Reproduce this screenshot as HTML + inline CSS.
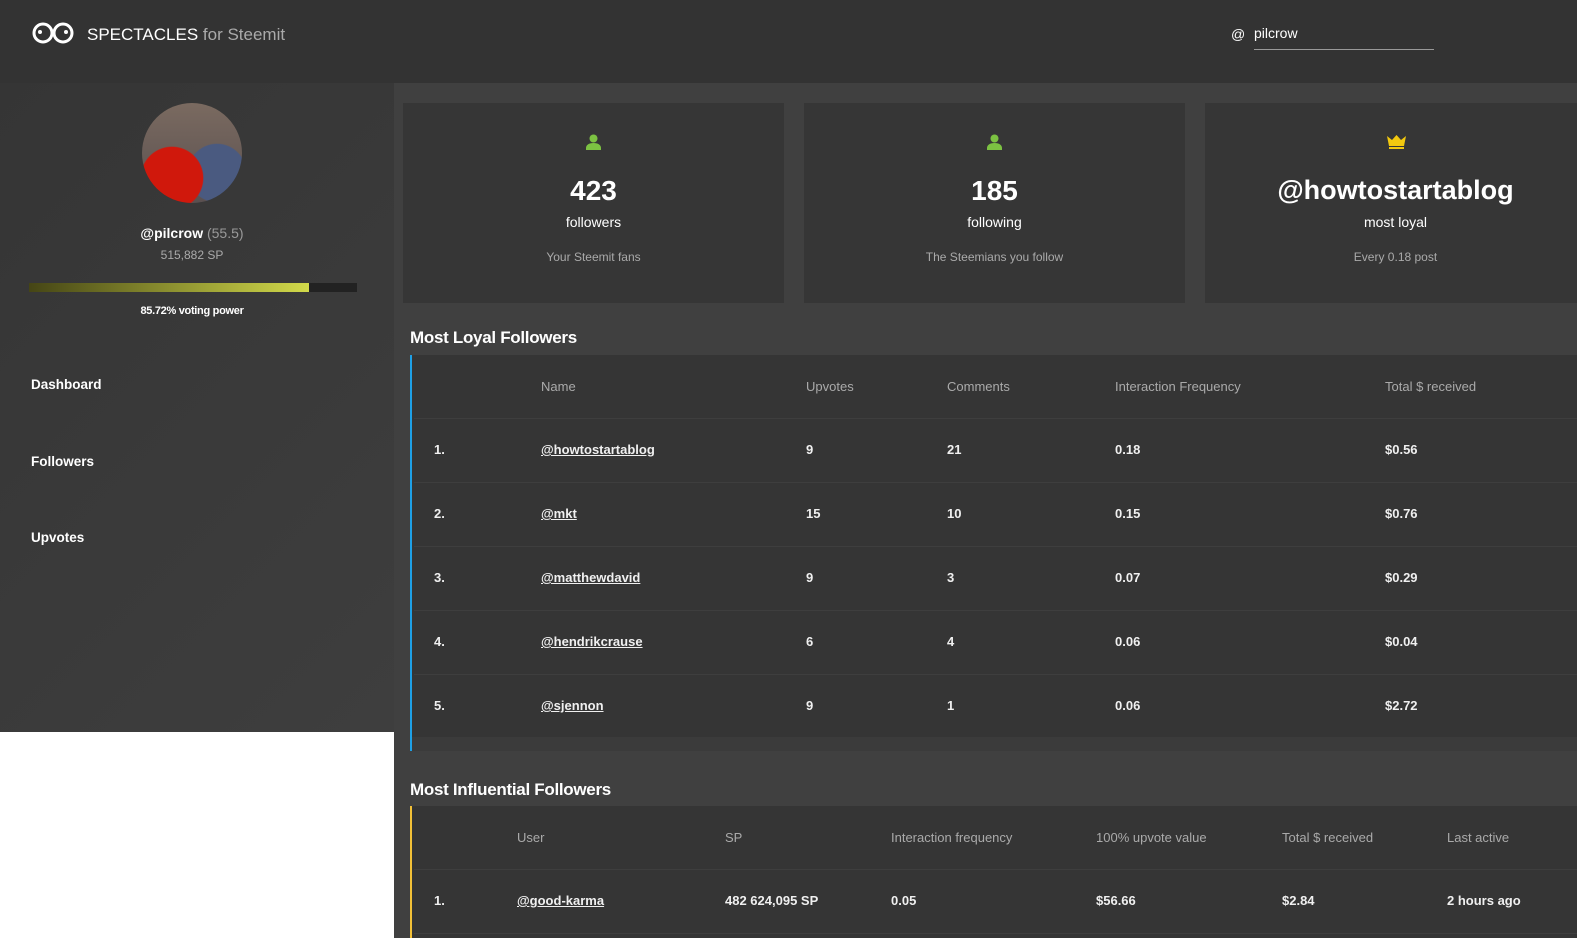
<!DOCTYPE html>
<html><head><meta charset="utf-8"><style>
*{margin:0;padding:0;box-sizing:border-box}
body{width:1577px;height:938px;overflow:hidden;background:#404040;font-family:"Liberation Sans",sans-serif;color:#fff;position:relative}
.hdr{position:absolute;left:0;top:0;width:1577px;height:83px;background:#333}
.side{position:absolute;left:0;top:83px;width:394px;height:649px;background:linear-gradient(135deg,#353535,#3e3e3e)}
.white{position:absolute;left:0;top:732px;width:394px;height:206px;background:#fff}
.a{position:absolute;white-space:nowrap}
.card{position:absolute;top:103px;width:381px;height:200px;background:#363636;text-align:center}
.card .n{position:absolute;left:0;right:0;top:72px;font-size:28px;font-weight:bold}
.card .l{position:absolute;left:0;right:0;top:111px;font-size:14px}
.card .s{position:absolute;left:0;right:0;top:147px;font-size:12px;color:#aaa}
.tbl{position:absolute;left:410px;width:1167px;background:#353535}
.row{position:absolute;left:2px;right:0;height:64px;border-bottom:1px solid #3e3e3e}
.th{color:#aaa;font-size:13px}
.td{font-size:13px;font-weight:bold;color:#f0f0f0}
u{text-decoration:underline}
</style></head><body>
<div class="hdr"></div>
<svg class="a" style="left:32px;top:21px" width="44" height="24" viewBox="0 0 44 24"><circle cx="11" cy="12" r="9" fill="none" stroke="#fff" stroke-width="3"/><circle cx="31" cy="12" r="9" fill="none" stroke="#fff" stroke-width="3"/><circle cx="8" cy="11" r="2" fill="#fff"/><circle cx="34" cy="11" r="2" fill="#fff"/></svg>
<div class="a" style="left:87px;top:25px;font-size:17px">SPECTACLES <span style="color:#aaa">for Steemit</span></div>
<div class="a" style="left:1231px;top:26px;font-size:14px">@</div>
<div class="a" style="left:1254px;top:25px;font-size:14px">pilcrow</div>
<div class="a" style="left:1254px;top:49px;width:180px;height:1px;background:#999"></div>
<div class="side"></div>
<div class="white"></div>
<div class="a" style="left:142px;top:103px;width:100px;height:100px;border-radius:50%;background:radial-gradient(circle at 30% 75%,#d0180c 0 30%,transparent 31%),radial-gradient(circle at 75% 70%,#4a5a80 0 28%,transparent 29%),linear-gradient(#7a6a60,#5a5050)"></div>
<div class="a" style="left:0;width:384px;text-align:center;top:225px;font-size:14px;font-weight:bold">@pilcrow <span style="color:#999;font-weight:normal">(55.5)</span></div>
<div class="a" style="left:0;width:384px;text-align:center;top:248px;font-size:12px;color:#aaa">515,882 SP</div>
<div class="a" style="left:29px;top:283px;width:328px;height:9px;background:#222"></div>
<div class="a" style="left:29px;top:283px;width:280px;height:9px;background:linear-gradient(90deg,#454515,#d2da4a)"></div>
<div class="a" style="left:0;width:384px;text-align:center;top:305px;font-size:11px;font-weight:bold;letter-spacing:-.3px">85.72% voting power</div>
<div class="a" style="left:31px;top:377px;font-size:13.5px;font-weight:bold">Dashboard</div>
<div class="a" style="left:31px;top:454px;font-size:13.5px;font-weight:bold">Followers</div>
<div class="a" style="left:31px;top:530px;font-size:13.5px;font-weight:bold">Upvotes</div>

<div class="card" style="left:403px"><svg class="a" style="left:182px;top:31px" width="17" height="16" viewBox="0 0 17 16"><circle cx="8.5" cy="4.5" r="4" fill="#7cc242"/><path d="M1 16v-2c0-3 3-5 7.5-5S16 11 16 14v2z" fill="#7cc242"/></svg><div class="n">423</div><div class="l">followers</div><div class="s">Your Steemit fans</div></div>
<div class="card" style="left:804px"><svg class="a" style="left:182px;top:31px" width="17" height="16" viewBox="0 0 17 16"><circle cx="8.5" cy="4.5" r="4" fill="#7cc242"/><path d="M1 16v-2c0-3 3-5 7.5-5S16 11 16 14v2z" fill="#7cc242"/></svg><div class="n">185</div><div class="l">following</div><div class="s">The Steemians you follow</div></div>
<div class="card" style="left:1205px"><svg class="a" style="left:182px;top:32px" width="19" height="15" viewBox="0 0 19 15"><path d="M0 1l5 4 4.5-5 4.5 5 5-4-2 10H2z" fill="#f2c80f"/><rect x="2" y="12" width="15" height="2" fill="#f2c80f"/></svg><div class="n" style="font-size:27px">@howtostartablog</div><div class="l">most loyal</div><div class="s">Every 0.18 post</div></div>

<div class="a" style="left:410px;top:328px;font-size:17px;font-weight:bold;letter-spacing:-.3px">Most Loyal Followers</div>
<div class="tbl" style="top:355px;height:396px;border-left:2px solid #1ea0e6">
<div class="row th" style="top:0"><span class="a" style="left:127px;top:24px">Name</span><span class="a" style="left:392px;top:24px">Upvotes</span><span class="a" style="left:533px;top:24px">Comments</span><span class="a" style="left:701px;top:24px">Interaction Frequency</span><span class="a" style="left:971px;top:24px">Total $ received</span></div>
<div class="row td" style="top:64px"><span class="a" style="left:20px;top:23px">1.</span><span class="a" style="left:127px;top:23px"><u>@howtostartablog</u></span><span class="a" style="left:392px;top:23px">9</span><span class="a" style="left:533px;top:23px">21</span><span class="a" style="left:701px;top:23px">0.18</span><span class="a" style="left:971px;top:23px">$0.56</span></div>
<div class="row td" style="top:128px"><span class="a" style="left:20px;top:23px">2.</span><span class="a" style="left:127px;top:23px"><u>@mkt</u></span><span class="a" style="left:392px;top:23px">15</span><span class="a" style="left:533px;top:23px">10</span><span class="a" style="left:701px;top:23px">0.15</span><span class="a" style="left:971px;top:23px">$0.76</span></div>
<div class="row td" style="top:192px"><span class="a" style="left:20px;top:23px">3.</span><span class="a" style="left:127px;top:23px"><u>@matthewdavid</u></span><span class="a" style="left:392px;top:23px">9</span><span class="a" style="left:533px;top:23px">3</span><span class="a" style="left:701px;top:23px">0.07</span><span class="a" style="left:971px;top:23px">$0.29</span></div>
<div class="row td" style="top:256px"><span class="a" style="left:20px;top:23px">4.</span><span class="a" style="left:127px;top:23px"><u>@hendrikcrause</u></span><span class="a" style="left:392px;top:23px">6</span><span class="a" style="left:533px;top:23px">4</span><span class="a" style="left:701px;top:23px">0.06</span><span class="a" style="left:971px;top:23px">$0.04</span></div>
<div class="row td" style="top:320px"><span class="a" style="left:20px;top:23px">5.</span><span class="a" style="left:127px;top:23px"><u>@sjennon</u></span><span class="a" style="left:392px;top:23px">9</span><span class="a" style="left:533px;top:23px">1</span><span class="a" style="left:701px;top:23px">0.06</span><span class="a" style="left:971px;top:23px">$2.72</span></div>
<div class="a" style="left:0;right:0;top:382px;height:14px;background:#3b3b3b"></div>
</div>

<div class="a" style="left:410px;top:780px;font-size:17px;font-weight:bold;letter-spacing:-.3px">Most Influential Followers</div>
<div class="tbl" style="top:806px;height:132px;border-left:2px solid #f2c037">
<div class="row th" style="top:0"><span class="a" style="left:103px;top:24px">User</span><span class="a" style="left:311px;top:24px">SP</span><span class="a" style="left:477px;top:24px">Interaction frequency</span><span class="a" style="left:682px;top:24px">100% upvote value</span><span class="a" style="left:868px;top:24px">Total $ received</span><span class="a" style="left:1033px;top:24px">Last active</span></div>
<div class="row td" style="top:64px"><span class="a" style="left:20px;top:23px">1.</span><span class="a" style="left:103px;top:23px"><u>@good-karma</u></span><span class="a" style="left:311px;top:23px">482 624,095 SP</span><span class="a" style="left:477px;top:23px">0.05</span><span class="a" style="left:682px;top:23px">$56.66</span><span class="a" style="left:868px;top:23px">$2.84</span><span class="a" style="left:1033px;top:23px">2 hours ago</span></div>
</div>
</body></html>
